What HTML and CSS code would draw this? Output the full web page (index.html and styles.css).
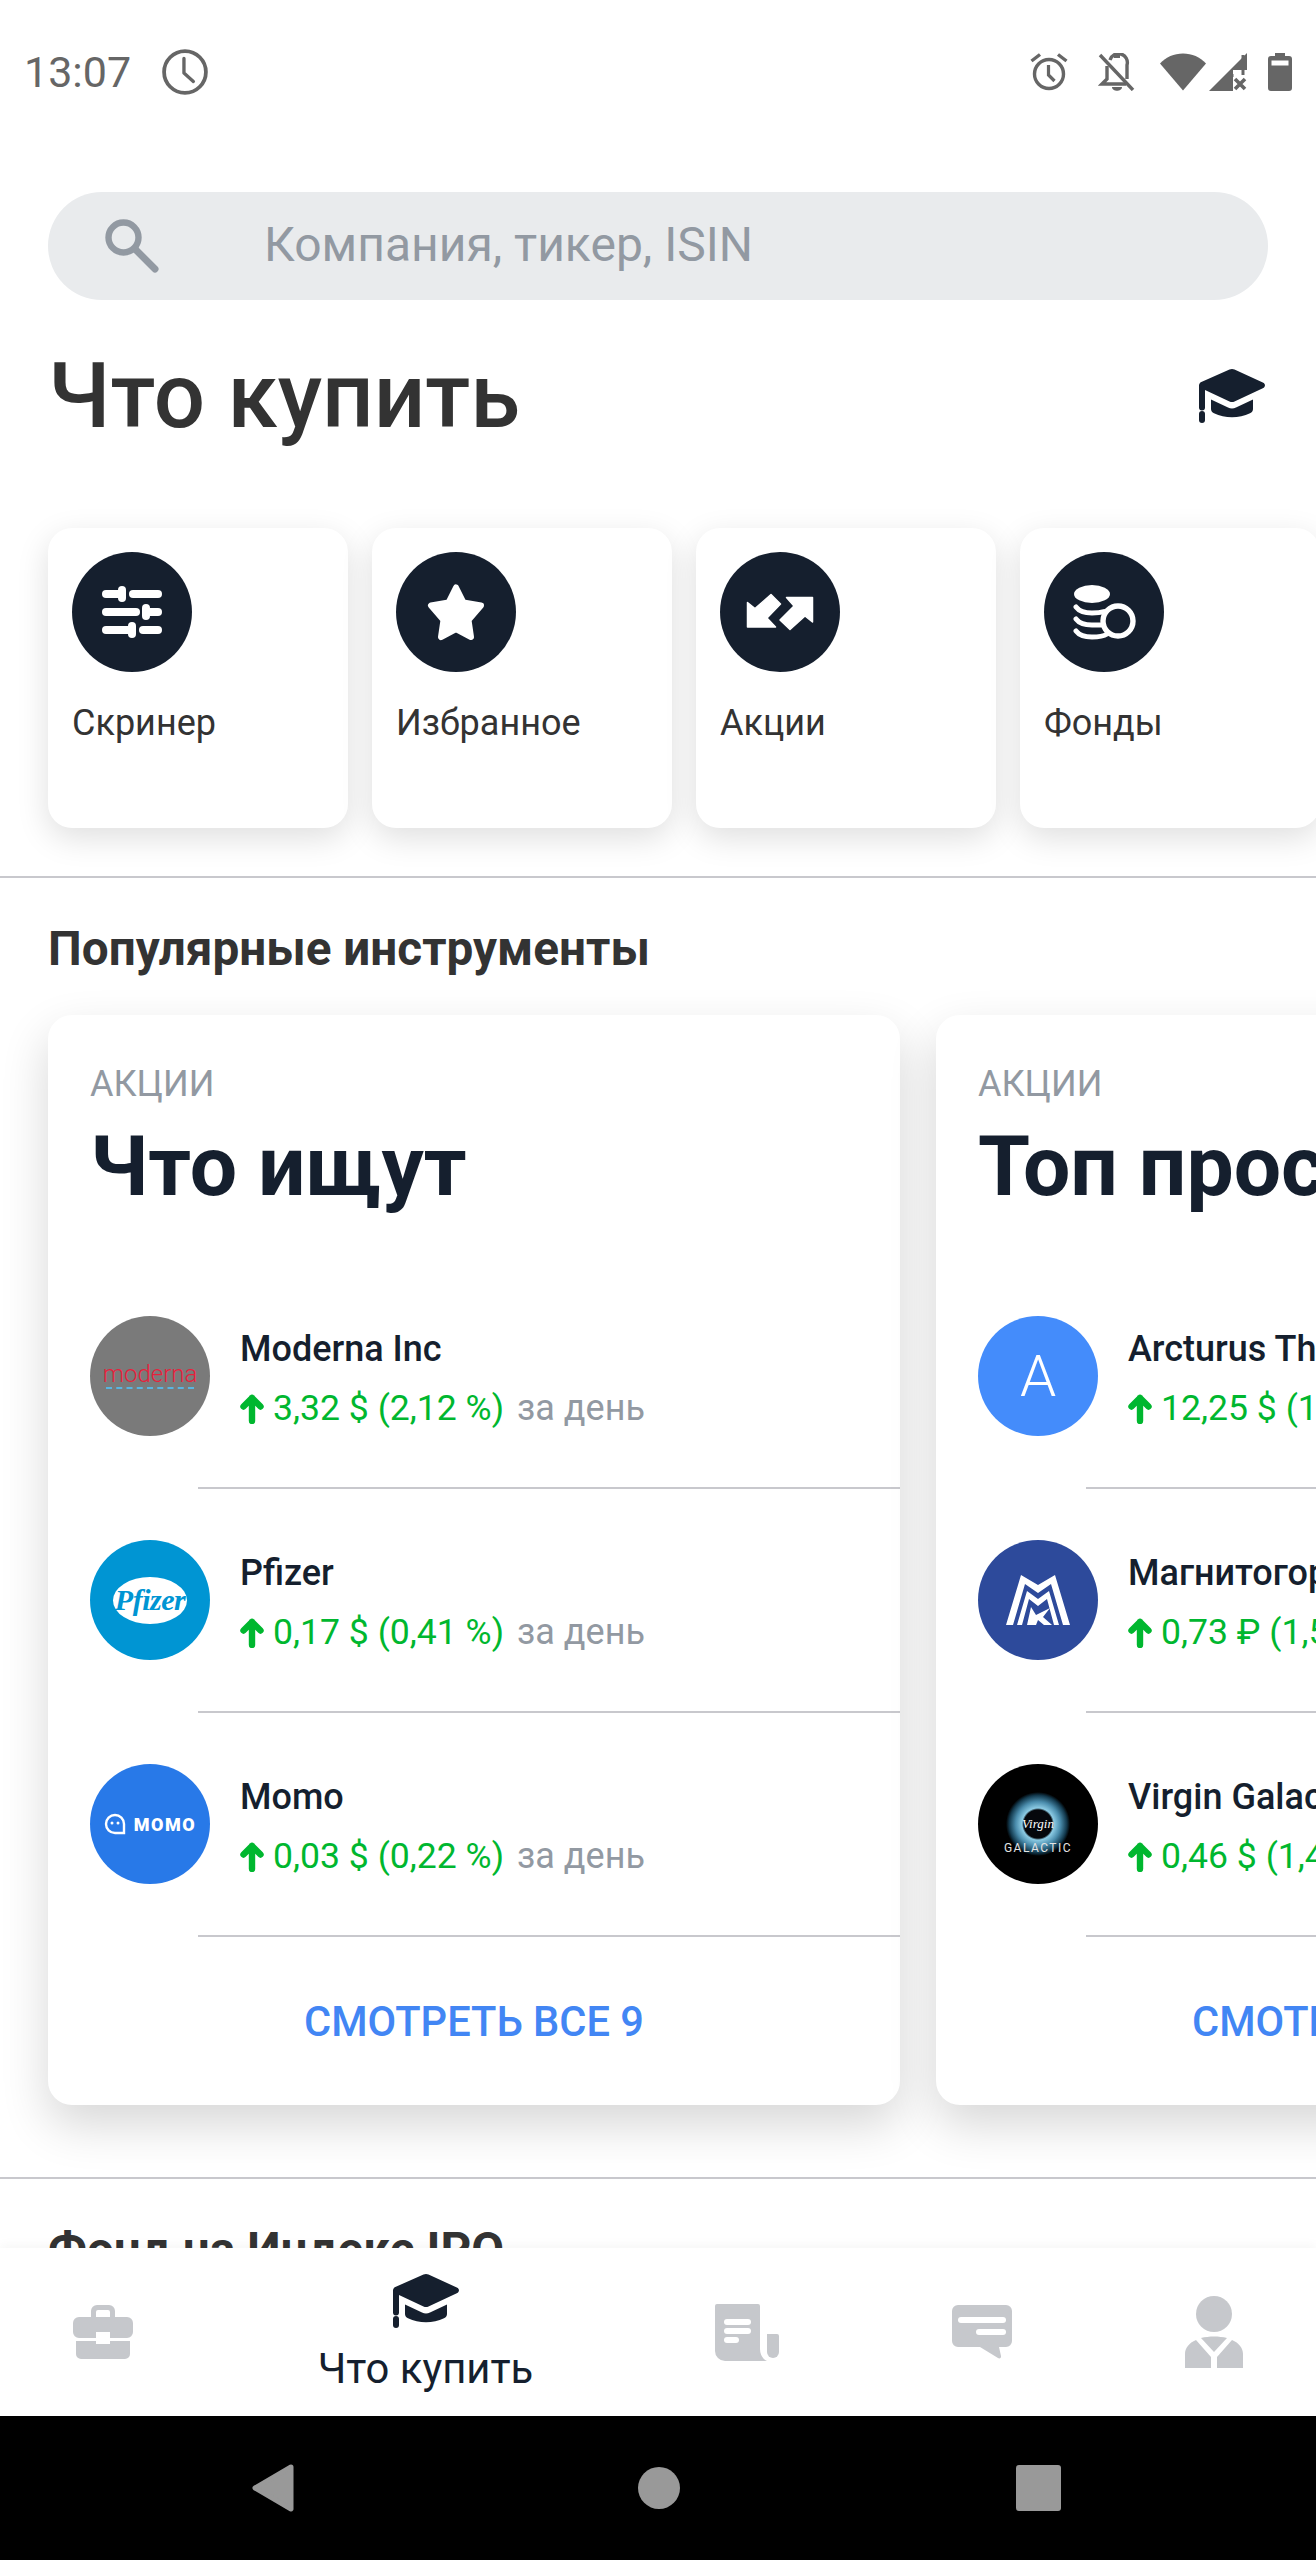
FILE: index.html
```html
<!DOCTYPE html>
<html lang="ru">
<head>
<meta charset="utf-8">
<title>Что купить</title>
<link rel="stylesheet" href="styles.css">
</head>
<body>
<svg class="defs" width="0" height="0">
  <defs>
    <symbol id="cap" viewBox="0 0 66 54">
      <path fill="currentColor" d="M30.5.6a6 6 0 0 1 5 0L63.8 13.4c2.9 1.3 2.9 4.6 0 5.9L35.5 32.4a6 6 0 0 1-5 0L6 21v17.5a3 3 0 0 1-6 0V16.6c0-1.800.9-3.100 2.300-3.700z"/>
      <path fill="currentColor" d="M12 30.600 29 38.400a9 9 0 0 0 8 0L54 30.600V40c0 2-1 3.200-3 4.300-11 5.300-25 5.300-36 0-2-1.100-3-2.300-3-4.300z"/>
      <rect fill="currentColor" x="0" y="42" width="6" height="12" rx="3"/>
    </symbol>
    <symbol id="arrow" viewBox="0 0 24 31">
      <path d="M12 28V5M3.500 13.500 12 5l8.500 8.500" fill="none" stroke="currentColor" stroke-width="6.400" stroke-linecap="round" stroke-linejoin="round"/>
    </symbol>
  </defs>
</svg>
<div class="phone">
  <header class="status">
    <div class="status-left">
      <span class="time">13:07</span>
      <svg class="i-clock" viewBox="0 0 44 44"><circle cx="22" cy="22" r="20" fill="none" stroke="#666" stroke-width="3.600"/><path d="M21 9v14l9 8" fill="none" stroke="#666" stroke-width="3.200" stroke-linecap="round" stroke-linejoin="round"/></svg>
    </div>
    <div class="status-right">
      <svg class="i-alarm" viewBox="0 0 38 38"><circle cx="19" cy="21" r="14.500" fill="none" stroke="#666" stroke-width="3.400"/><path d="M18.500 12v10l6 6" fill="none" stroke="#666" stroke-width="3.200"/><path d="M1.500 8 10 1.500M36.500 8 28 1.500" fill="none" stroke="#666" stroke-width="3.400"/></svg>
      <svg class="i-bell" viewBox="0 0 38 38"><path d="M9 13v13l-5 5h24" fill="none" stroke="#666" stroke-width="3.400"/><path d="M12 7a8 8 0 0 1 17 5v14" fill="none" stroke="#666" stroke-width="3.400"/><rect x="16" y="0" width="6" height="5" fill="#666"/><path d="M14 34h10c0 5-10 5-10 0z" fill="#666"/><path d="M2 2l33 35" stroke="#666" stroke-width="3.400"/></svg>
      <svg class="i-wifi" viewBox="0 0 46 38"><path d="M23 37.500 0 10.500C6 4 14 .5 23 .5s17 3.500 23 10z" fill="#666"/></svg>
      <svg class="i-signal" viewBox="0 0 38 38"><path d="M38 0v17H24v21H0zM24.500 21v17h-4V21z" fill="#666"/><path d="M24 24h14v14H24z" fill="#fff"/><path d="M26 26l10 10M36 26 26 36" stroke="#666" stroke-width="3.600"/><path d="M34 2 v20" stroke="#666" stroke-width="3"/></svg>
      <svg class="i-batt" viewBox="0 0 24 38"><path d="M7 0h10v3h4a3 3 0 0 1 3 3v29a3 3 0 0 1-3 3H3a3 3 0 0 1-3-3V6a3 3 0 0 1 3-3h4z" fill="#666"/><rect x="3.500" y="7.500" width="17" height="5" fill="#fff"/></svg>
    </div>
  </header>

  <main class="content">
    <div class="search">
      <svg class="i-search" viewBox="0 0 54 54"><circle cx="18.500" cy="18.500" r="15" fill="none" stroke="#9299a2" stroke-width="6.400"/><path d="M30 30l20 20" stroke="#9299a2" stroke-width="7" stroke-linecap="round"/></svg>
      <span class="search-text">Компания, тикер, ISIN</span>
    </div>

    <div class="title-row">
      <h1 class="title">Что купить</h1>
      <svg class="i-cap i-cap-top"><use href="#cap"/></svg>
    </div>

    <div class="tiles">
      <div class="tile">
        <div class="tile-icon">
          <svg viewBox="0 0 120 120"><g fill="#fff"><rect x="30" y="38" width="21" height="8" rx="4"/><rect x="46" y="34" width="8" height="16" rx="4"/><rect x="57" y="38" width="33" height="8" rx="4"/><rect x="30" y="56" width="38" height="8" rx="4"/><rect x="70" y="52" width="8" height="16" rx="4"/><rect x="74" y="56" width="16" height="8" rx="4"/><rect x="30" y="74" width="30" height="8" rx="4"/><rect x="56" y="70" width="8" height="16" rx="4"/><rect x="67" y="74" width="23" height="8" rx="4"/></g></svg>
        </div>
        <span class="tile-label">Скринер</span>
      </div>
      <div class="tile">
        <div class="tile-icon">
          <svg viewBox="0 0 120 120"><path d="M60 35.500 67.500 50.500 85 53.500 72.500 68 75 85 60 77 45 85 47.500 68 35 53.500 52.500 50.500z" fill="#fff" stroke="#fff" stroke-width="6" stroke-linejoin="round"/></svg>
        </div>
        <span class="tile-label">Избранное</span>
      </div>
      <div class="tile">
        <div class="tile-icon">
          <svg viewBox="0 0 120 120"><g fill="#fff" stroke="#fff" stroke-width="1.500" stroke-linejoin="round"><path d="M27.500 75V50.500l7.500 6L51 42.500 60.500 52 47 66l8.500 9z"/><path d="M92.500 45.500V70l-7.500-6L70 77.500 60 68l14-14-7.500-8.500z"/></g></svg>
        </div>
        <span class="tile-label">Акции</span>
      </div>
      <div class="tile">
        <div class="tile-icon">
          <svg viewBox="0 0 120 120"><ellipse cx="48" cy="42" rx="18" ry="9" fill="#fff"/><path d="M32 55c3 4 10 6 16 6 5 0 9-.5 12-1.500M32 67c3 4 10 6 16 6h9M32 79c3 4 10 6 16 6 7 0 12-1 15-3" fill="none" stroke="#fff" stroke-width="5" stroke-linecap="round"/><circle cx="74" cy="69" r="15" fill="none" stroke="#fff" stroke-width="5.400"/></svg>
        </div>
        <span class="tile-label">Фонды</span>
      </div>
    </div>

    <hr class="sep sep-tiles">
    <h2 class="section-title">Популярные инструменты</h2>

    <div class="cards">
      <section class="card">
        <div class="card-head">
          <div class="card-kicker">АКЦИИ</div>
          <div class="card-title">Что ищут</div>
        </div>
        <div class="row">
          <div class="logo logo-moderna"><span class="moderna-word">moderna</span><span class="moderna-dash"></span></div>
          <div class="row-text">
            <div class="name">Moderna Inc</div>
            <div class="change"><svg class="up"><use href="#arrow"/></svg><span class="delta">3,32 $ (2,12 %)</span><span class="period">за день</span></div>
          </div>
        </div>
        <div class="row-line"></div>
        <div class="row">
          <div class="logo logo-pfizer"><span class="pfizer-oval">Pfizer</span></div>
          <div class="row-text">
            <div class="name">Pfizer</div>
            <div class="change"><svg class="up"><use href="#arrow"/></svg><span class="delta">0,17 $ (0,41 %)</span><span class="period">за день</span></div>
          </div>
        </div>
        <div class="row-line"></div>
        <div class="row">
          <div class="logo logo-momo">
            <svg class="momo-mark" viewBox="0 0 22 22"><path d="M11 2a9 9 0 1 0 0 18h9v-9a9 9 0 0 0-9-9z" fill="none" stroke="#fff" stroke-width="2.400"/><circle cx="8" cy="10" r="1.500" fill="#fff"/><circle cx="14" cy="10" r="1.500" fill="#fff"/></svg>
            <span class="momo-word">MOMO</span>
          </div>
          <div class="row-text">
            <div class="name">Momo</div>
            <div class="change"><svg class="up"><use href="#arrow"/></svg><span class="delta">0,03 $ (0,22 %)</span><span class="period">за день</span></div>
          </div>
        </div>
        <div class="row-line"></div>
        <div class="card-foot">СМОТРЕТЬ ВСЕ 9</div>
      </section>

      <section class="card">
        <div class="card-head">
          <div class="card-kicker">АКЦИИ</div>
          <div class="card-title">Топ просмотров</div>
        </div>
        <div class="row">
          <div class="logo logo-arcturus">A</div>
          <div class="row-text">
            <div class="name">Arcturus Therapeutics</div>
            <div class="change"><svg class="up"><use href="#arrow"/></svg><span class="delta">12,25 $ (12,40 %)</span><span class="period">за день</span></div>
          </div>
        </div>
        <div class="row-line"></div>
        <div class="row">
          <div class="logo logo-mmk">
            <svg viewBox="0 0 64 50" class="mmk-mark"><path fill="#fff" d="M0 50 15 0 32 10 49 0 64 50H57L45 9 32 18 19 9 7 50z"/><path fill="#fff" d="M11 50 21 16 32 24 43 16 53 50H48L41 24 32 31 23 24 16 50z"/><path fill="#fff" d="M21 50 25 32 30 40 44 33 37 42 46 50H38L32 45 30 50z"/></svg>
          </div>
          <div class="row-text">
            <div class="name">Магнитогорский меткомбинат</div>
            <div class="change"><svg class="up"><use href="#arrow"/></svg><span class="delta">0,73 ₽ (1,54 %)</span><span class="period">за день</span></div>
          </div>
        </div>
        <div class="row-line"></div>
        <div class="row">
          <div class="logo logo-virgin">
            <div class="iris"><span class="virgin-word">Virgin</span></div>
            <span class="galactic-word">GALACTIC</span>
          </div>
          <div class="row-text">
            <div class="name">Virgin Galactic</div>
            <div class="change"><svg class="up"><use href="#arrow"/></svg><span class="delta">0,46 $ (1,42 %)</span><span class="period">за день</span></div>
          </div>
        </div>
        <div class="row-line"></div>
        <div class="card-foot">СМОТРЕТЬ ВСЕ 9</div>
      </section>
    </div>

    <hr class="sep sep-cards">
    <h2 class="section-title">Фонд на Индекс IPO</h2>
  </main>

  <nav class="tabbar">
    <div class="tab">
      <svg class="i-brief" viewBox="0 0 60 54"><path fill="#c6c8cc" d="M18 12V6a6 6 0 0 1 6-6h12a6 6 0 0 1 6 6v6h12a6 6 0 0 1 6 6v9a6 6 0 0 1-6 6H37v-6H23v6H6a6 6 0 0 1-6-6v-9a6 6 0 0 1 6-6zM23 12h14V7a2 2 0 0 0-2-2H25a2 2 0 0 0-2 2z" fill-rule="evenodd"/><path fill="#c6c8cc" d="M3 36h20v3h14v-3h20v13a5 5 0 0 1-5 5H8a5 5 0 0 1-5-5z"/></svg>
    </div>
    <div class="tab tab-active">
      <svg class="i-cap"><use href="#cap"/></svg>
      <span class="tab-label">Что купить</span>
    </div>
    <div class="tab">
      <svg class="i-news" viewBox="0 0 64 57"><path fill="#c6c8cc" d="M2 0h41a2 2 0 0 1 2 2v43c0 6 3 10 7 12H10A10 10 0 0 1 0 47V2a2 2 0 0 1 2-2z"/><path fill="#c6c8cc" d="M52 30h10a2 2 0 0 1 2 2v16a6 6 0 0 1-12 0V32z"/><g fill="#fff"><rect x="9" y="15" width="27" height="6" rx="3"/><rect x="9" y="24" width="27" height="6" rx="3"/><rect x="9" y="33" width="15" height="6" rx="3"/></g></svg>
    </div>
    <div class="tab">
      <svg class="i-chat" viewBox="0 0 60 54"><path fill="#c6c8cc" d="M6 0h48a6 6 0 0 1 6 6v30a6 6 0 0 1-6 6h-7l2 9c.4 2-1.500 3-3 2L28 42H6a6 6 0 0 1-6-6V6a6 6 0 0 1 6-6z"/><g fill="#fff"><rect x="6" y="12" width="48" height="6" rx="3"/><rect x="24" y="24" width="30" height="6" rx="3"/></g></svg>
    </div>
    <div class="tab">
      <svg class="i-person" viewBox="0 0 58 72"><ellipse cx="29" cy="18" rx="18" ry="18" fill="#c6c8cc"/><path fill="#c6c8cc" d="M0 72V58c0-6 4-11 11-14l15 17v11zM58 72V58c0-6-4-11-11-14L32 61v11zM16 42c8-2 18-2 26 0L29 56z"/></svg>
    </div>
  </nav>

  <footer class="sysnav">
    <svg class="i-back" viewBox="0 0 42 48"><path d="M39 3 3 24l36 21z" fill="#999" stroke="#999" stroke-width="5" stroke-linejoin="round"/></svg>
    <div class="i-home"></div>
    <div class="i-recent"></div>
  </footer>
</div>
</body>
</html>
```

FILE: styles.css
```css
* { box-sizing: border-box; }
html, body { margin: 0; padding: 0; }
body { background: #fff; font-family: Roboto, "Noto Sans", sans-serif; color: #151f2e; }
.defs { display: block; height: 0; }

.phone { width: 1316px; height: 2560px; display: flex; flex-direction: column; overflow: hidden; background: #fff; }

/* status bar */
.status { flex: none; height: 144px; padding: 0 24px; display: flex; align-items: center; justify-content: space-between; }
.status-left { display: flex; align-items: center; gap: 31px; }
.time { font-size: 43px; color: #666; }
.i-clock { width: 46px; height: 46px; }
.status-right { display: flex; align-items: center; }
.i-alarm { width: 38px; height: 38px; margin-right: 30px; }
.i-bell { width: 38px; height: 38px; margin-right: 24px; }
.i-wifi { width: 46px; height: 38px; margin-right: 3px; }
.i-signal { width: 38px; height: 38px; margin-right: 21px; }
.i-batt { width: 24px; height: 38px; }

/* content */
.content { flex: 1; min-height: 0; overflow: hidden; }
.search { margin: 48px 48px 0; height: 108px; border-radius: 54px; background: #e9ebed; display: flex; align-items: center; padding-left: 57px; }
.i-search { width: 54px; height: 54px; flex: none; }
.search-text { margin: 0 0 4px 105px; font-size: 48px; color: #9299a2; }

.title-row { margin: 46px 48px 0; display: flex; align-items: center; justify-content: space-between; height: 100px; }
.title { margin: 0; font-size: 90.500px; font-weight: 500; color: #333; line-height: 100px; }
.i-cap { width: 66px; height: 54px; display: block; color: #151f2e; flex: none; }
.i-cap-top { margin-right: 3px; }

.tiles { margin-top: 82px; padding-left: 48px; display: flex; gap: 24px; }
.tile { flex: none; width: 300px; height: 300px; border-radius: 24px; background: #fff; padding: 24px; box-shadow: 0 10px 32px rgba(0, 0, 0, .13); display: flex; flex-direction: column; }
.tile-icon { width: 120px; height: 120px; border-radius: 50%; background: #151f2e; }
.tile-icon svg { display: block; width: 120px; height: 120px; }
.tile-label { margin-top: 29px; font-size: 36px; line-height: 44px; color: #333; }

.sep { margin: 0; border: 0; height: 2px; background: #c8c8cd; }
.sep-tiles { margin-top: 48px; }
.sep-cards { margin-top: 72px; }
.section-title { margin: 46px 48px 0; font-size: 47.700px; line-height: 50px; font-weight: 700; color: #333; }

.cards { margin-top: 41px; padding-left: 48px; display: flex; gap: 36px; }
.card { flex: none; width: 852px; height: 1090px; border-radius: 24px; background: #fff; box-shadow: 0 20px 48px rgba(0, 0, 0, .16); overflow: hidden; padding-left: 42px; }
.card-head { height: 250px; padding-top: 49px; }
.card-kicker { font-size: 36px; line-height: 40px; color: #9299a2; }
.card-title { margin-top: 13px; font-size: 84px; line-height: 100px; font-weight: 700; color: #151f2e; white-space: nowrap; }

.row { display: flex; align-items: center; padding: 51px 0; gap: 30px; }
.row-line { margin-left: 108px; height: 2px; background: #c8c8cd; }
.row-text { min-width: 0; display: flex; flex-direction: column; padding-top: 5px; }
.name { font-size: 36px; line-height: 44px; font-weight: 500; color: #151f2e; white-space: nowrap; }
.change { margin-top: 15px; display: flex; align-items: center; font-size: 36px; line-height: 44px; white-space: nowrap; }
.up { width: 24px; height: 31px; color: #00b72f; flex: none; margin-right: 9px; }
.delta { color: #00b72f; font-size: 35.600px; }
.period { margin-left: 13px; color: #9299a2; }
.card-foot { height: 167px; padding: 2px 42px 0 0; display: flex; align-items: center; justify-content: center; font-size: 41.600px; font-weight: 500; color: #4286f4; white-space: nowrap; }

/* logos */
.logo { flex: none; width: 120px; height: 120px; border-radius: 50%; display: flex; align-items: center; justify-content: center; overflow: hidden; color: #fff; }
.logo-moderna { background: #7a7a7a; flex-direction: column; }
.moderna-word { font-size: 24px; line-height: 22px; font-weight: 300; color: #e8203c; }
.moderna-dash { width: 88px; margin-top: 2px; border-top: 2px dashed #58b4e0; }
.logo-pfizer { background: #0095d3; }
.pfizer-oval { width: 74px; height: 47px; border-radius: 50%; background: #fff; color: #0095d3; font-family: "Liberation Serif", serif; font-style: italic; font-weight: 700; font-size: 30px; letter-spacing: -.5px; display: flex; align-items: center; justify-content: center; }
.logo-momo { background: #2879e8; gap: 8px; }
.momo-mark { width: 22px; height: 22px; flex: none; }
.momo-word { font-size: 18px; font-weight: 900; letter-spacing: 1.500px; color: #fff; }
.logo-arcturus { background: #448cfb; font-size: 58px; font-weight: 300; }
.logo-mmk { background: #2d4a9b; }
.mmk-mark { width: 64px; height: 50px; }
.logo-virgin { background: #000; flex-direction: column; padding-bottom: 2px; }
.iris { width: 66px; height: 64px; border-radius: 50%; background: radial-gradient(circle closest-side, #05070c 0 44%, #8ccbe4 50%, #4a8cac 70%, #12384c 90%, rgba(0, 0, 0, 0) 100%); display: flex; align-items: center; justify-content: center; }
.virgin-word { font-family: "Liberation Serif", serif; font-style: italic; font-size: 13px; color: #fff; }
.galactic-word { margin-top: -14px; font-size: 12px; line-height: 12px; letter-spacing: 1.500px; color: #e4e4e4; }

/* tab bar */
.tabbar { flex: none; height: 168px; background: #fff; box-shadow: 0 -3px 10px rgba(0, 0, 0, .04); display: grid; grid-template-columns: 205px 441px 201px 270px 194px; position: relative; }
.tab { display: flex; flex-direction: column; align-items: center; justify-content: center; }
.tab-label { margin-top: 19px; font-size: 41.800px; line-height: 44px; color: #151f2e; }
.i-brief { width: 60px; height: 54px; }
.i-news { width: 64px; height: 57px; }
.i-chat { width: 60px; height: 54px; }
.i-person { width: 58px; height: 72px; }

/* system nav */
.sysnav { flex: none; height: 144px; background: #000; display: grid; grid-template-columns: 252px 42px 344px 42px 336px 46px; align-items: center; }
.i-back { grid-column: 2; width: 42px; height: 48px; }
.i-home { grid-column: 4; width: 42px; height: 42px; border-radius: 50%; background: #999; }
.i-recent { grid-column: 6; width: 45px; height: 46px; border-radius: 3px; background: #999; }
```
